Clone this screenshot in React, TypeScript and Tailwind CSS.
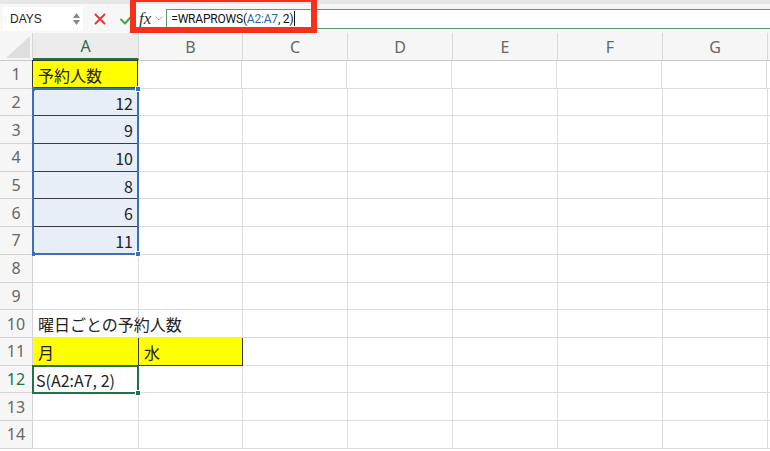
import React from "react";

const COLS = ["A", "B", "C", "D", "E", "F", "G"];
const WIDTHS = [106, 104, 105, 105, 105, 105, 105];
const ROWH = "h-[27.7px]";

const font = { fontFamily: '"Noto Sans CJK JP", "Noto Sans", sans-serif' };

function Cell({ r, c }: { r: number; c: number }) {
  const w = WIDTHS[c];
  let cls = "relative shrink-0 border-r border-b border-[#dcdcdc] bg-white";
  let content: React.ReactNode = null;
  const nums: Record<number, string> = { 2: "12", 3: "9", 4: "10", 5: "8", 6: "6", 7: "11" };

  if (c === 0 && r === 1) {
    cls = "relative shrink-0 border border-[#3a3a2a] bg-[#ffff00] -mt-px -ml-px";
    content = <span className="absolute left-[5px] top-[2px] text-[16px] text-[#222]">予約人数</span>;
  } else if (c === 0 && nums[r]) {
    cls = "relative shrink-0 border-r border-b border-[#3c3c44] bg-[#e8eef8]";
    content = <span className="absolute right-[5px] top-[2px] text-[16px] text-[#222]">{nums[r]}</span>;
  } else if (r === 10 && c === 0) {
    content = (
      <span className="absolute left-[5px] top-[2px] z-10 whitespace-nowrap text-[16px] text-[#222]">
        曜日ごとの予約人数
      </span>
    );
  } else if (r === 11 && (c === 0 || c === 1)) {
    cls = "relative shrink-0 border-r border-b border-[#3a3a2a] bg-[#ffff00]";
    content = <span className="absolute left-[5px] top-[2px] text-[16px] text-[#222]">{c === 0 ? "月" : "水"}</span>;
  } else if (r === 12 && c === 0) {
    content = (
      <span className="absolute left-[3px] top-[2px] z-10 whitespace-nowrap text-[16px] text-[#222]">S(A2:A7, 2)</span>
    );
  }

  const selection = c === 0 && r === 2;
  const active = c === 0 && r === 12;

  return (
    <div className={`${cls} ${ROWH}`} style={{ width: w, boxSizing: "border-box" }}>
      {content}
      {selection && (
        <div className="pointer-events-none absolute left-[-1px] top-[-1px] z-20 h-[167px] w-[107px] border-2 border-[#3c6ec0]">
          <div className="absolute -left-[2px] -top-[3px] h-[4px] w-[3px] bg-[#3c6ec0]" />
          <div className="absolute -right-[4px] -top-[4px] h-[6px] w-[6px] border border-white bg-[#3c6ec0]" />
          <div className="absolute -left-[2px] -bottom-[3px] h-[4px] w-[3px] bg-[#3c6ec0]" />
          <div className="absolute -right-[4px] -bottom-[4px] h-[6px] w-[6px] border border-white bg-[#3c6ec0]" />
        </div>
      )}
      {active && (
        <div className="pointer-events-none absolute left-[-1px] top-[-1px] z-20 h-[29px] w-[107px] border-2 border-[#217346]">
          <div className="absolute -right-[4px] -bottom-[4px] h-[6px] w-[6px] border border-white bg-[#217346]" />
        </div>
      )}
    </div>
  );
}

export default function App() {
  const rows = Array.from({ length: 14 }, (_, i) => i + 1);
  return (
    <div className="relative h-[451px] w-[770px] overflow-hidden bg-white" style={font}>
      {/* Toolbar */}
      <div
        className="flex h-[33px] items-center border-t-[4px] border-[#e6e6e6] bg-[#f7f7f7]"
        style={{ fontFamily: '"Liberation Sans", Arial, sans-serif' }}
      >
        <div className="ml-[3px] flex h-[24px] w-[80px] items-center justify-between bg-white pl-[7px] pr-[3px]">
          <span className="text-[12px] text-[#222]">DAYS</span>
          <div className="flex flex-col items-center gap-[2px]">
            <svg width="7" height="5" viewBox="0 0 7 5"><path d="M0 5 L3.5 0 L7 5 Z" fill="#888" /></svg>
            <svg width="7" height="5" viewBox="0 0 7 5"><path d="M0 0 L3.5 5 L7 0 Z" fill="#888" /></svg>
          </div>
        </div>
        <div className="ml-[10px] flex w-[14px] items-center justify-center">
          <svg width="12" height="12" viewBox="0 0 12 12">
            <path d="M1.5 1.5 L10.5 10.5 M10.5 1.5 L1.5 10.5" stroke="#e23a3a" strokeWidth="2" strokeLinecap="round" />
          </svg>
        </div>
        <div className="ml-[13px] flex w-[14px] items-center justify-center">
          <svg width="14" height="12" viewBox="0 0 14 12">
            <path d="M1 6.5 L5 10.5 L13 1.5" stroke="#4aa54a" strokeWidth="2" fill="none" strokeLinecap="round" strokeLinejoin="round" />
          </svg>
        </div>
        <div className="ml-[2px] flex h-[24px] items-center bg-white pl-[3px]">
          <span
            className="text-[17px] italic text-[#333]"
            style={{ fontFamily: '"Liberation Serif", "Times New Roman", serif' }}
          >
            fx
          </span>
          <svg className="ml-[4px]" width="8" height="5" viewBox="0 0 8 5">
            <path d="M0.5 0.5 L4 4 L7.5 0.5" stroke="#aaa" strokeWidth="1" fill="none" />
          </svg>
          <div className="ml-[3px] h-[19px] w-[1px] bg-[#5d9a6c]" />
        </div>
        <div className="flex h-[20px] flex-1 items-center border-y border-[#5d9a6c] bg-white pl-[4px]">
          <span
            className="text-[12px] tracking-[-0.2px] text-[#111]"
            style={{ fontFamily: 'Roboto, "Liberation Sans", sans-serif' }}
          >
            =WRAPROWS(<span className="text-[#2a63b8]">A2:A7</span>, 2)
          </span>
          <span className="ml-[1px] h-[15px] w-[1px] bg-[#111]" />
        </div>
      </div>

      {/* Column header */}
      <div className="flex h-[28px] border-b border-[#c8c8c8] bg-[#f6f6f6]">
        <div className="relative h-full w-[33px] shrink-0 border-r border-[#d4d4d4]">
          <svg className="absolute bottom-[2px] right-[2px]" width="24" height="22" viewBox="0 0 24 22">
            <path d="M24 0 L24 22 L0 22 Z" fill="#dedede" />
          </svg>
        </div>
        {COLS.map((c, i) => (
          <div
            key={c}
            className={`flex h-full shrink-0 items-center justify-center border-r border-[#d8d8d8] text-[16px] ${
              i === 0 ? "border-b-2 border-b-[#217346] text-[#217346] bg-[#ececec]" : "text-[#666]"
            }`}
            style={{ width: WIDTHS[i], fontFamily: '"Noto Sans", sans-serif' }}
          >
            {c}
          </div>
        ))}
        <div className="flex-1" />
      </div>

      {/* Rows */}
      {rows.map((r) => (
        <div key={r} className="flex">
          <div
            className={`flex w-[33px] shrink-0 items-center justify-center border-r border-b border-[#d4d4d4] bg-[#f6f6f6] text-[16px] ${ROWH} ${
              r === 12 ? "text-[#217346]" : "text-[#666]"
            }`}
            style={{ fontFamily: '"Noto Sans", sans-serif' }}
          >
            {r}
          </div>
          {COLS.map((_, ci) => (
            <Cell key={ci} r={r} c={ci} />
          ))}
          <div className={`flex-1 border-b border-[#dcdcdc] ${ROWH}`} />
        </div>
      ))}

      {/* Red annotation box */}
      <div className="pointer-events-none absolute left-[130px] top-[-4px] h-[37px] w-[187px] border-[6px] border-[#f5311c]" />
    </div>
  );
}
